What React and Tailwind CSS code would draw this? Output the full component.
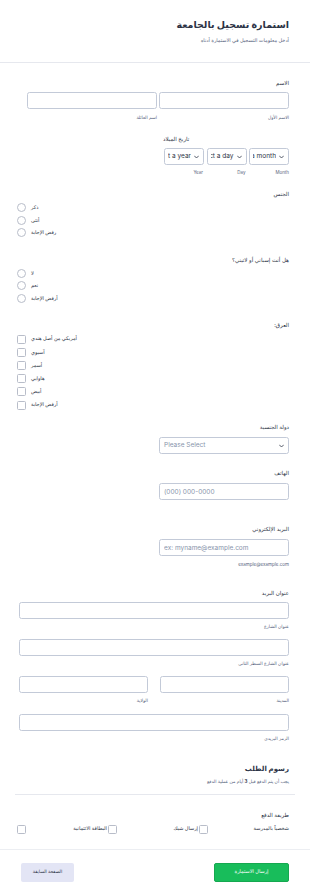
import React from "react";

const font = { fontFamily: '"Inter", "DejaVu Sans", "Noto Sans", sans-serif' };

const Label = ({ children, className = "" }) => (
    <div className={"text-[5.5px] leading-[9px] text-[#2c3345] " + className}>{children}</div>
);

const Sub = ({ children, className = "" }) => (
    <div className={"text-[4.5px] leading-[7px] text-[#57647e] " + className}>{children}</div>
);

const Box = ({ className = "", children }) => (
    <div className={"h-[17px] border border-[#c3cad8] rounded-[2.5px] bg-white " + className}>{children}</div>
);

const Chevron = () => (
    <svg width="5" height="4" viewBox="0 0 10 6" className="shrink-0">
        <path d="M1 1l4 4 4-4" fill="none" stroke="#2c3345" strokeWidth="1.6" strokeLinecap="round" strokeLinejoin="round" />
    </svg>
);

const DateSelect = ({ text }) => (
    <div dir="ltr" className="w-[40px] h-[17px] border border-[#c3cad8] rounded-[2.5px] bg-white flex items-center pl-[3px] pr-[4px] gap-[3px]">
        <div className="flex-1 overflow-hidden flex justify-end">
            <span className="whitespace-nowrap text-[6.5px] text-[#2c3345]">{text}</span>
        </div>
        <Chevron />
    </div>
);

const Radio = ({ label }) => (
    <div dir="ltr" className="h-[12.5px] flex items-center gap-[5px]">
        <span className="w-[9px] h-[9px] rounded-full border border-[#b8bdc9] bg-white"></span>
        <span className="text-[5px] text-[#2c3345]">{label}</span>
    </div>
);

const Check = ({ label }) => (
    <div dir="ltr" className="h-[13.2px] flex items-center gap-[5px]">
        <span className="w-[9px] h-[9px] rounded-[1.5px] border border-[#b8bdc9] bg-white"></span>
        <span className="text-[5px] text-[#2c3345]">{label}</span>
    </div>
);

const PayOption = ({ label }) => (
    <div className="flex items-center justify-between">
        <span className="text-[5px] text-[#2c3345]">{label}</span>
        <span className="w-[9px] h-[9px] rounded-[1.5px] border border-[#b8bdc9] bg-white"></span>
    </div>
);

export default function App() {
    return (
        <div dir="rtl" style={font} className="w-[310px] min-h-[893px] bg-white">
            {/* header */}
            <div className="pt-[17px] pr-[21px] pb-[18px] border-b border-[#e6e8ee]">
                <h1 className="text-[9.5px] leading-[16px] font-bold text-[#2c3345]">استمارة تسجيل بالجامعة</h1>
                <p className="mt-[3px] text-[5px] leading-[8px] text-[#57647e]">أدخل معلومات التسجيل في الاستمارة أدناه</p>
            </div>

            <div className="pr-[21px] pl-[17px] pt-[16px]">
                {/* name */}
                <Label>الاسم</Label>
                <div className="mt-[4px] flex gap-[2px] w-[262px]">
                    <div className="w-[130px]">
                        <Box />
                        <Sub className="mt-[4.5px]">الاسم الأول</Sub>
                    </div>
                    <div className="w-[130px]">
                        <Box />
                        <Sub className="mt-[4.5px]">اسم العائلة</Sub>
                    </div>
                </div>

                {/* birth date */}
                <div className="w-[127px]">
                    <div className="mt-[14px] flex justify-end pl-[1px]">
                        <Label>تاريخ الميلاد</Label>
                    </div>
                    <div className="mt-[4.5px] flex gap-[2.5px]">
                        <div className="w-[40px]">
                            <DateSelect text="Select a month" />
                            <Sub className="mt-[3.5px]">Month</Sub>
                        </div>
                        <div className="w-[40px]">
                            <DateSelect text="Select a day" />
                            <Sub className="mt-[3.5px] pr-[1px]">Day</Sub>
                        </div>
                        <div className="w-[40px]">
                            <DateSelect text="Select a year" />
                            <Sub className="mt-[3.5px] pr-[1px]">Year</Sub>
                        </div>
                    </div>
                </div>

                {/* gender */}
                <Label className="mt-[14px]">الجنس</Label>
                <div className="mt-[3px]">
                    <Radio label="ذكر" />
                    <Radio label="أنثى" />
                    <Radio label="رفض الإجابة" />
                </div>

                {/* hispanic */}
                <Label className="mt-[17px]">هل أنت إسباني أو لاتيني؟</Label>
                <div className="mt-[2px]">
                    <Radio label="لا" />
                    <Radio label="نعم" />
                    <Radio label="أرفض الإجابة" />
                </div>

                {/* race */}
                <Label className="mt-[16px]">العرق:</Label>
                <div className="mt-[3px]">
                    <Check label="أمريكي من أصل هندي" />
                    <Check label="آسيوي" />
                    <Check label="أسمر" />
                    <Check label="هاوايي" />
                    <Check label="أبيض" />
                    <Check label="أرفض الإجابة" />
                </div>

                {/* country */}
                <Label className="mt-[11px]">دولة الجنسية</Label>
                <div dir="ltr" className="mt-[5.5px] ml-auto w-[130px] h-[17px] border border-[#c3cad8] rounded-[2.5px] bg-white flex items-center justify-between px-[4px]">
                    <span className="text-[6.5px] text-[#8894ab]">Please Select</span>
                    <Chevron />
                </div>

                {/* phone */}
                <Label className="mt-[14.5px]">الهاتف</Label>
                <input dir="ltr" placeholder="(000) 000-0000" className="mt-[5.5px] block w-[130px] h-[17px] border border-[#c3cad8] rounded-[2.5px] bg-white px-[4px] text-[6.5px] placeholder:text-[#8894ab] outline-none" />

                {/* email */}
                <Label className="mt-[24.5px]">البريد الإلكتروني</Label>
                <input dir="ltr" placeholder="ex: myname@example.com" className="mt-[5.5px] block w-[130px] h-[17px] border border-[#c3cad8] rounded-[2.5px] bg-white px-[4px] text-[6.5px] placeholder:text-[#8894ab] outline-none" />
                <Sub className="mt-[4.5px]">example@example.com</Sub>

                {/* address */}
                <Label className="mt-[21px]">عنوان البريد</Label>
                <Box className="mt-[4.5px] w-[270px]" />
                <Sub className="mt-[3.5px]">عنوان الشارع</Sub>
                <Box className="mt-[9.5px] w-[270px]" />
                <Sub className="mt-[3.5px]">عنوان الشارع السطر الثاني</Sub>
                <div className="mt-[9.5px] flex gap-[12px] w-[270px]">
                    <div className="w-[129px]">
                        <Box />
                        <Sub className="mt-[3.5px]">المدينة</Sub>
                    </div>
                    <div className="w-[129px]">
                        <Box />
                        <Sub className="mt-[3.5px]">الولاية</Sub>
                    </div>
                </div>
                <Box className="mt-[10.5px] w-[270px]" />
                <Sub className="mt-[3.5px]">الرمز البريدي</Sub>

                {/* fees */}
                <h2 className="mt-[22px] text-[7px] leading-[10px] font-bold text-[#2c3345]">رسوم الطلب</h2>
                <p className="mt-[4px] text-[4.5px] leading-[8px] text-[#57647e]">
                    يجب أن يتم الدفع قبل <span className="font-bold text-[#2c3345]">3</span> أيام من عملية الدفع
                </p>
            </div>
            <div className="mx-[15px] mt-[8px] border-b border-[#e6e8ee]"></div>

            <div className="pr-[21px] pl-[17px] pt-[16px]">
                <Label>طريقة الدفع</Label>
                <div className="mt-[4px] h-[11px] grid grid-cols-3 gap-x-[1px] w-[272px] items-center">
                    <PayOption label="شخصياً بالمدرسة" />
                    <PayOption label="إرسال شيك" />
                    <PayOption label="البطاقة الائتمانية" />
                </div>
            </div>

            {/* footer */}
            <div className="mt-[14px] border-t border-[#eceef2] pt-[13px] pr-[21px] pl-[21px] flex justify-between">
                <button className="w-[75px] h-[19px] rounded-[2px] bg-[#18bd5b] border border-[#16a850] text-white text-[5px]">إرسال الاستمارة</button>
                <button className="w-[53px] h-[19px] rounded-[2px] bg-[#e3e5f5] text-[#2c3345] text-[4.5px]">الصفحة السابقة</button>
            </div>
        </div>
    );
}
